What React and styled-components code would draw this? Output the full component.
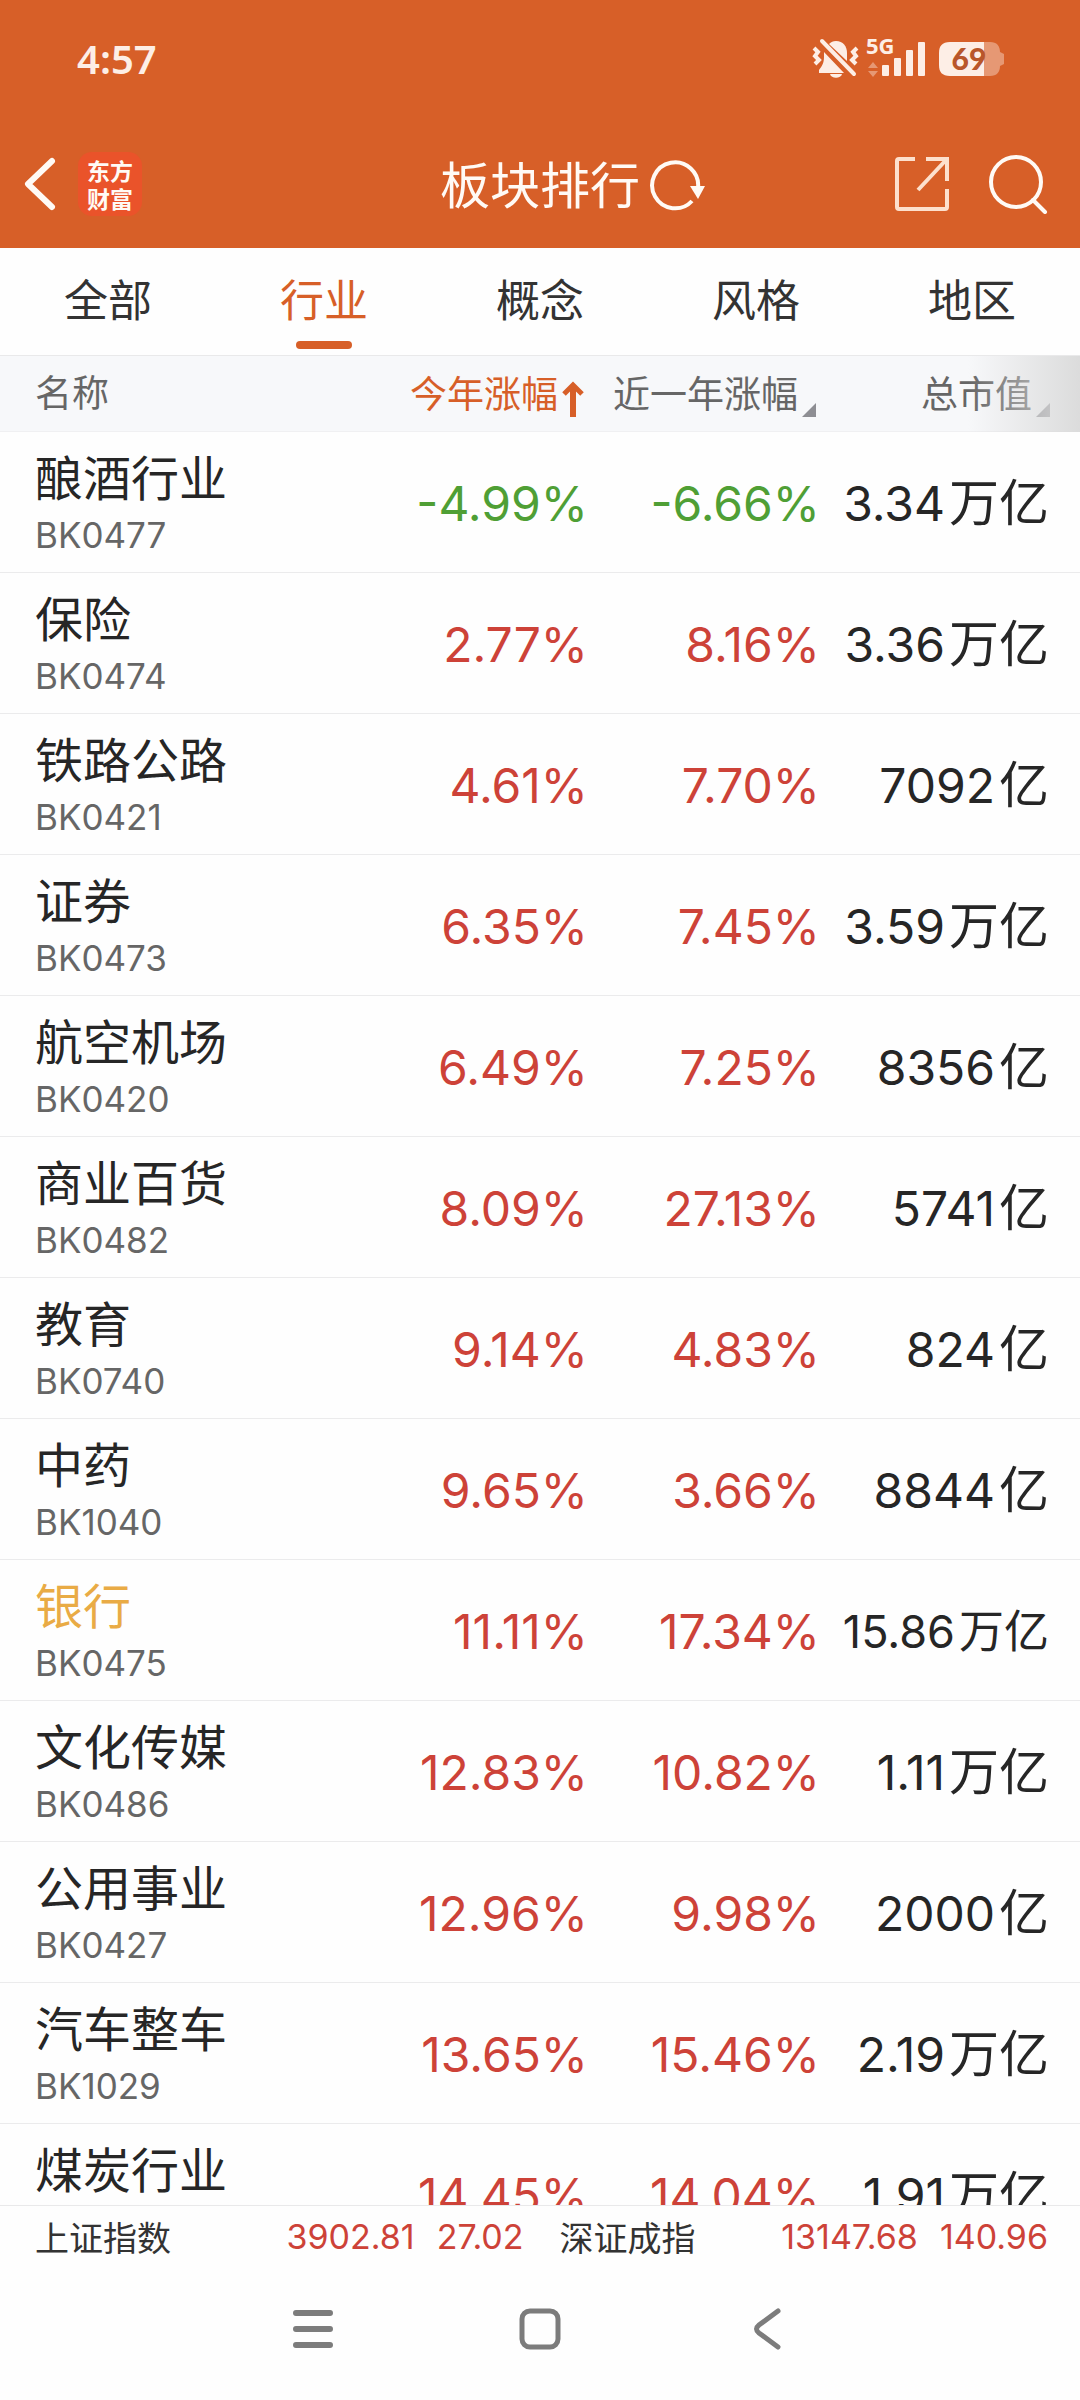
import React, {useState} from 'react'
import styled, {createGlobalStyle} from 'styled-components';

const GlobalStyle = createGlobalStyle`
    *{
        box-sizing:border-box;
    }
    body{
        margin:0;
        background:#fefefe;
        color:#262626;
        font-family:Inter, "Noto Sans CJK SC", sans-serif;
    }
    button{
        margin:0;
        padding:0;
        border:0;
        background:none;
        color:inherit;
        font:inherit;
        cursor:pointer;
    }
    svg{
        display:block;
    }
`
const Page = styled.div`
    display:flex;
    flex-direction:column;
    height:100vh;
`
const Top = styled.header`
    background:#d75f28;
    color:#fffaf5;
`
const StatusBar = styled.div`
    display:flex;
    align-items:center;
    justify-content:space-between;
    height:120px;
    padding:0 76px 4px 77px;
    color:#fdeee6;
`
const Clock = styled.time`
    font-family:"Noto Sans", sans-serif;
    font-size:40px;
    font-weight:600;
`
const StatusIcons = styled.div`
    display:flex;
    align-items:center;
`
const NavBar = styled.div`
    display:grid;
    grid-template-columns:1fr auto 1fr;
    align-items:center;
    height:128px;
    padding:0 20px;
`
const NavSide = styled.div`
    display:flex;
    align-items:center;
    justify-content:${props => props.$end ? 'flex-end' : 'flex-start'};
    gap:${props => props.$end ? '38px' : '18px'};
    padding-right:${props => props.$end ? '12px' : '0'};
`
const Logo = styled.span`
    width:64px;
    height:64px;
    padding:4px 0;
    border-radius:14px;
    background:#ea532a;
    font-family:"Noto Sans CJK SC", sans-serif;
    font-size:23px;
    font-weight:700;
    line-height:28px;
    text-align:center;
`
const Title = styled.h1`
    display:flex;
    align-items:center;
    gap:8px;
    margin:0;
    padding:4px 0 0 66px;
    font-size:50px;
    font-weight:400;
    line-height:64px;
`
const Tabs = styled.nav`
    display:flex;
    height:108px;
    border-bottom:1px solid #e9e9ea;
`
const Tab = styled.button`
    display:flex;
    flex:1;
    flex-direction:column;
    align-items:center;
    justify-content:flex-end;
    gap:8px;
    padding-bottom:6px;
    color:${props => props.$active ? '#d75f28' : '#333'};
    font-size:44px;
    line-height:64px;

    &::after{
        content:"";
        width:56px;
        height:8px;
        border-radius:4px;
        background:${props => props.$active ? '#d75f28' : 'transparent'};
    }
`
const List = styled.main`
    position:relative;
    flex:1;
    min-height:0;
    overflow:hidden;
`
const Fade = styled.div`
    position:absolute;
    top:0;
    right:0;
    width:112px;
    height:76px;
    background:linear-gradient(to right, rgba(247,248,250,0), rgba(218,218,218,0.95));
    pointer-events:none;
`
const Table = styled.table`
    width:100%;
    table-layout:fixed;
    border-collapse:separate;
    border-spacing:0;
`
const Col = styled.col`
    width:${props => props.$width};
`
const HeadCell = styled.th`
    height:76px;
    padding:0 ${props => props.$last ? '30px' : '4px'} 0 ${props => props.$first ? '35px' : '0'};
    border-bottom:1px solid #f0f0f2;
    background:#f7f8fa;
    color:${props => props.$active ? '#d75f28' : '#666'};
    font-size:37px;
    font-weight:400;
    line-height:44px;
    text-align:${props => props.$first ? 'left' : 'right'};
    white-space:nowrap;
`
const SortButton = styled.button`
    display:inline-flex;
    align-items:flex-end;
    gap:4px;
    vertical-align:middle;
`
const Cell = styled.td`
    height:141px;
    padding:3px ${props => props.$last ? '31px' : '0'} 0 0;
    border-bottom:1px solid #ebebec;
    color:${props => props.$color};
    font-size:${props => props.$tight ? '45px' : '48px'};
    line-height:60px;
    text-align:right;
    white-space:nowrap;
`
const Unit = styled.span`
    margin-left:4px;
    font-size:${props => props.$tight ? '45px' : '50px'};
`
const NameCell = styled.th`
    height:141px;
    padding:4px 0 0 35px;
    border-bottom:1px solid #ebebec;
    font-weight:400;
    text-align:left;
    white-space:nowrap;
`
const Name = styled.div`
    color:${props => props.$marked ? '#e9ab45' : '#262626'};
    font-size:48px;
    line-height:62px;
`
const Code = styled.div`
    min-height:50px;
    color:#666;
    font-size:35px;
    line-height:50px;
`
const IndexBar = styled.section`
    display:grid;
    grid-template-columns:1fr 1fr;
    gap:36px;
    height:64px;
    padding:0 32px 2px 35px;
    border-top:1px solid #e9e9ea;
`
const IndexItem = styled.div`
    display:flex;
    align-items:center;
    gap:22px;
    color:#cd4238;
    font-size:34px;
`
const IndexName = styled.span`
    flex:1;
    color:#333;
`
const SystemBar = styled.nav`
    display:flex;
    justify-content:center;
    height:131px;
`
const SystemButton = styled.button`
    display:flex;
    flex:0 0 21%;
    align-items:center;
    justify-content:center;
    padding-bottom:12px;
    color:#7c7c7c;
`

const tabs = ['全部', '行业', '概念', '风格', '地区']

const rows = [
    {name:'酿酒行业', code:'BK0477', year:'-4.99%', last:'-6.66%', cap:'3.34', unit:'万亿'},
    {name:'保险', code:'BK0474', year:'2.77%', last:'8.16%', cap:'3.36', unit:'万亿'},
    {name:'铁路公路', code:'BK0421', year:'4.61%', last:'7.70%', cap:'7092', unit:'亿'},
    {name:'证券', code:'BK0473', year:'6.35%', last:'7.45%', cap:'3.59', unit:'万亿'},
    {name:'航空机场', code:'BK0420', year:'6.49%', last:'7.25%', cap:'8356', unit:'亿'},
    {name:'商业百货', code:'BK0482', year:'8.09%', last:'27.13%', cap:'5741', unit:'亿'},
    {name:'教育', code:'BK0740', year:'9.14%', last:'4.83%', cap:'824', unit:'亿'},
    {name:'中药', code:'BK1040', year:'9.65%', last:'3.66%', cap:'8844', unit:'亿'},
    {name:'银行', code:'BK0475', year:'11.11%', last:'17.34%', cap:'15.86', unit:'万亿', marked:true},
    {name:'文化传媒', code:'BK0486', year:'12.83%', last:'10.82%', cap:'1.11', unit:'万亿'},
    {name:'公用事业', code:'BK0427', year:'12.96%', last:'9.98%', cap:'2000', unit:'亿'},
    {name:'汽车整车', code:'BK1029', year:'13.65%', last:'15.46%', cap:'2.19', unit:'万亿'},
    {name:'煤炭行业', code:'', year:'14.45%', last:'14.04%', cap:'1.91', unit:'万亿'},
]

const indexes = [
    {name:'上证指数', value:'3902.81', change:'27.02'},
    {name:'深证成指', value:'13147.68', change:'140.96'},
]

const trend = value => value.startsWith('-') ? '#4f9f35' : '#cd4238'

const isLong = row => (row.cap + row.unit).length > 6

const StatusGlyphs = () => (
    <svg width="192" height="60" viewBox="812 28 192 60" fill="currentColor" role="img" aria-label="5G 69%">
        {/* muted bell */}
        <path d="M829 44c2-2 4-3 7-3 7 0 11 5 11 12v8z" />
        <path d="M824 52v5c0 6-2 9-5 13v3h25z" />
        <path d="M830 74h12c-1 5-11 5-12 0z" />
        <path d="M822 41l32 33" fill="none" stroke="currentColor" strokeWidth="4" strokeLinecap="round" />
        <path d="M814 48l4 4-3 4 4 4-4 4M857 48l-4 4 3 4-4 4 4 4" fill="none" stroke="currentColor" strokeWidth="4" />
        {/* signal */}
        <text x="866" y="54" fontFamily="Noto Sans, sans-serif" fontSize="22" fontWeight="700">5G</text>
        <path d="M873 62l5 6h-10zM873 77l5-6h-10z" opacity="0.4" />
        <rect x="882" y="65" width="7" height="11" rx="1" />
        <rect x="894" y="58" width="7" height="18" rx="1" />
        <rect x="906" y="50" width="7" height="26" rx="1" />
        <rect x="918" y="42" width="7" height="34" rx="1" />
        {/* battery */}
        <path d="M984 42h6c7 0 10 4 10 10l4 2v10l-4 2c0 6-3 10-10 10h-6z" opacity="0.4" />
        <path d="M984 42h-34c-8 0-11 4-11 11v12c0 7 3 11 11 11h34z" />
        <text x="969" y="70" textAnchor="middle" fill="#b9562a" fontFamily="Lato, sans-serif" fontSize="30" fontWeight="900">69</text>
    </svg>
)

const BackIcon = () => (
    <svg width="40" height="56" viewBox="0 0 40 56" fill="none" stroke="currentColor" strokeWidth="6" strokeLinecap="round" strokeLinejoin="round">
        <path d="M32 5L8 28l24 23" />
    </svg>
)

const RefreshIcon = () => (
    <svg width="58" height="52" viewBox="0 0 58 52">
        <path d="M44 41A23 23 0 1 1 50 28" fill="none" stroke="currentColor" strokeWidth="4" />
        <path d="M42 26h15l-7 13z" fill="currentColor" />
    </svg>
)

const ShareIcon = () => (
    <svg width="56" height="56" viewBox="0 0 56 56" fill="none" stroke="#fde0cd" strokeWidth="4">
        <path d="M21 3H5q-2 0-2 2v46q0 2 2 2h46q2 0 2-2V33M32 3h21v22M52 4L24 34" />
    </svg>
)

const SearchIcon = () => (
    <svg width="60" height="60" viewBox="0 0 60 60" fill="none" stroke="currentColor" strokeWidth="4" strokeLinecap="round">
        <circle cx="28" cy="28" r="25" />
        <path d="M45 46l12 12" />
    </svg>
)

const AscIcon = () => (
    <svg width="22" height="36" viewBox="0 0 22 36" fill="none" stroke="currentColor">
        <path d="M11 36V4" strokeWidth="6" />
        <path d="M2 13l9-9 9 9" strokeWidth="5" />
    </svg>
)

const SortIcon = () => (
    <svg width="14" height="14" viewBox="0 0 14 14">
        <path d="M14 0v14H0z" fill="#8e8e93" />
    </svg>
)

const Header = () => (
    <Top>
        <StatusBar>
            <Clock>4:57</Clock>
            <StatusIcons><StatusGlyphs /></StatusIcons>
        </StatusBar>
        <NavBar>
            <NavSide>
                <button aria-label="返回"><BackIcon /></button>
                <Logo>东方<br />财富</Logo>
            </NavSide>
            <Title>
                板块排行
                <button aria-label="刷新"><RefreshIcon /></button>
            </Title>
            <NavSide $end>
                <button aria-label="分享"><ShareIcon /></button>
                <button aria-label="搜索"><SearchIcon /></button>
            </NavSide>
        </NavBar>
    </Top>
)

const SectorTable = () => (
    <Table>
        <colgroup>
            <col />
            <Col $width="232px" />
            <Col $width="232px" />
            <Col $width="260px" />
        </colgroup>
        <thead>
            <tr>
                <HeadCell scope="col" $first>名称</HeadCell>
                <HeadCell scope="col" $active aria-sort="ascending">
                    <SortButton>今年涨幅<AscIcon /></SortButton>
                </HeadCell>
                <HeadCell scope="col">
                    <SortButton>近一年涨幅<SortIcon /></SortButton>
                </HeadCell>
                <HeadCell scope="col" $last>
                    <SortButton>总市值<SortIcon /></SortButton>
                </HeadCell>
            </tr>
        </thead>
        <tbody>
            {rows.map(row => (
                <tr key={row.name}>
                    <NameCell scope="row">
                        <Name $marked={row.marked}>{row.name}</Name>
                        <Code>{row.code}</Code>
                    </NameCell>
                    <Cell $color={trend(row.year)}>{row.year}</Cell>
                    <Cell $color={trend(row.last)}>{row.last}</Cell>
                    <Cell $color="#262626" $last $tight={isLong(row)}>
                        {row.cap}<Unit $tight={isLong(row)}>{row.unit}</Unit>
                    </Cell>
                </tr>
            ))}
        </tbody>
    </Table>
)

const App = () => {
  const [active, setActive] = useState('行业')

  return (
    <Page>
        <GlobalStyle />
        <Header />
        <Tabs>
            {tabs.map(tab => (
                <Tab key={tab} $active={tab === active} onClick={() => setActive(tab)}>{tab}</Tab>
            ))}
        </Tabs>
        <List>
            <SectorTable />
            <Fade />
        </List>
        <IndexBar>
            {indexes.map(item => (
                <IndexItem key={item.name}>
                    <IndexName>{item.name}</IndexName>
                    <span>{item.value}</span>
                    <span>{item.change}</span>
                </IndexItem>
            ))}
        </IndexBar>
        <SystemBar>
            <SystemButton aria-label="菜单">
                <svg width="40" height="40" viewBox="0 0 40 40" stroke="currentColor" strokeWidth="6" strokeLinecap="round">
                    <path d="M3 4h34M3 20h34M3 36h34" />
                </svg>
            </SystemButton>
            <SystemButton aria-label="主页">
                <svg width="42" height="42" viewBox="0 0 42 42" fill="none" stroke="currentColor" strokeWidth="5">
                    <rect x="3" y="3" width="36" height="36" rx="8" />
                </svg>
            </SystemButton>
            <SystemButton aria-label="后退">
                <svg width="28" height="42" viewBox="0 0 28 42" fill="none" stroke="currentColor" strokeWidth="5" strokeLinecap="round">
                    <path d="M25 3L6 17q-5 4 0 8l19 14" />
                </svg>
            </SystemButton>
        </SystemBar>
    </Page>
  )
}

export default App
